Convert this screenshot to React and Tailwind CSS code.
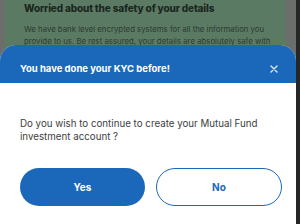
export default function App() {
  return (
    <div className="relative w-[300px] h-[224px] overflow-hidden flex bg-[#262626]" style={{ fontFamily: "Inter, 'Open Sans', sans-serif" }}>
      <div className="w-[296px] h-full bg-[#6c6e6c] pl-[5px] pr-[11px]">
        <div className="h-full bg-[#5b7a63] pl-[19px] pt-[1px]">
          <div className="text-[10px] font-extrabold text-[#1c2620] leading-[14px] tracking-[-0.15px]">Worried about the safety of your details</div>
          <div className="mt-[8px] text-[7.8px] text-[#2c3a31] leading-[12px] whitespace-nowrap">
            We have bank level encrypted systems for all the information you
            <br />
            provide to us. Be rest assured, your details are absolutely safe with
          </div>
        </div>
      </div>
      <div className="absolute left-0 top-[45px] w-[296px] h-[179px] bg-white rounded-t-[16px] overflow-hidden flex flex-col">
        <div className="h-[38px] bg-[#1b68bb] flex items-start justify-between pl-[20px] pr-[18px] pt-[17px]">
          <span className="text-white text-[9.5px] leading-[14px] font-bold">You have done your KYC before!</span>
          <svg width="8" height="8" viewBox="0 0 8 8" className="mt-[3px]">
            <path d="M1 1L7 7M7 1L1 7" stroke="#dfe9f5" strokeWidth="1.4" strokeLinecap="round" />
          </svg>
        </div>
        <div className="pl-[20px] pt-[35px] text-[9.75px] text-[#3d3d3d] leading-[12.5px]">
          Do you wish to continue to create your Mutual Fund
          <br />
          investment account ?
        </div>
        <div className="flex gap-[11px] pl-[20px] mt-[25px]">
          <button className="w-[125px] h-[38px] rounded-full bg-[#1b68bb] text-white text-[10px] font-bold">Yes</button>
          <button className="w-[126px] h-[38px] rounded-full border border-[#1b68bb] bg-white text-[#1b68bb] text-[10px] font-bold">No</button>
        </div>
      </div>
    </div>
  );
}
